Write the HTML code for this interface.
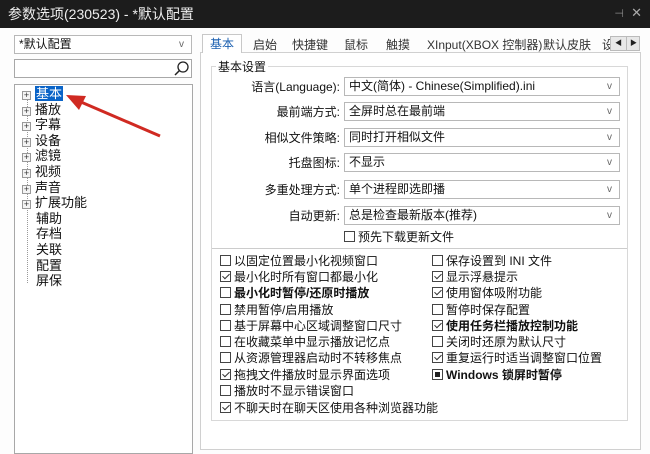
<!DOCTYPE html>
<html><head><meta charset="utf-8"><style>
*{margin:0;padding:0;box-sizing:border-box}
body{width:650px;height:450px;overflow:hidden;background:#fdfdfd;font-family:"Liberation Sans","Noto Sans CJK SC",sans-serif;font-size:12px;color:#111;position:relative}
.a{position:absolute;white-space:nowrap}
.title{left:0;top:0;width:650px;height:28px;background:#1c1c1c;color:#eee;font-size:14px;line-height:28px;padding-left:8px}
.box{position:absolute;border:1px solid #a8a8a8;background:#fff}
.combo{position:absolute;border:1px solid #b8b8b8;background:#fff;height:19px;line-height:17px;padding-left:4px;font-size:12px}
.combo i{position:absolute;right:7px;top:0;font-style:normal;color:#666;font-size:10px}
.cb{position:absolute;white-space:nowrap;line-height:16px;font-size:12px}
.cb b.k{display:inline-block;width:11px;height:11px;border:1px solid #444;vertical-align:-1px;margin-right:3px;position:relative;background:#fff}
.cb b.k.c::after{content:"";position:absolute;left:3px;top:0px;width:3px;height:6px;border:solid #333;border-width:0 1.5px 1.5px 0;transform:rotate(45deg)}
.cb b.k.f::after{content:"";position:absolute;left:2px;top:2px;width:5px;height:5px;background:#222}
.bold{font-weight:bold}
.tree{position:absolute;font-size:13px;line-height:15.6px}
.pm{display:inline-block;width:9px;height:9px;border:1px solid #999;font-size:9px;line-height:7px;text-align:center;color:#333;margin-right:4px;vertical-align:0px;background:#f4f4f4}
.lbl{position:absolute;right:310px;text-align:right;white-space:nowrap}
</style></head><body>
<div class="a title">参数选项(230523) - *默认配置</div>
<div class="a" style="right:26px;top:7px;color:#888;font-size:11px">⊣</div>
<div class="a" style="right:8px;top:5px;color:#aaa;font-size:13px">✕</div>

<div class="combo" style="left:14px;top:35px;width:178px;">*默认配置<i>v</i></div>
<div class="box" style="left:14px;top:59px;width:178px;height:19px"></div>
<svg class="a" style="left:172px;top:60px" width="18" height="18"><circle cx="11" cy="7" r="5" fill="none" stroke="#222" stroke-width="1.3"/><line x1="7.5" y1="10.5" x2="3" y2="15" stroke="#222" stroke-width="1.5"/></svg>
<div class="box" style="left:14px;top:84px;width:179px;height:370px"></div>
<div class="a" style="left:27px;top:95px;height:188px;border-left:1px dotted #999"></div>
<div class="tree" style="left:22px;top:86px">
<div><span class="pm">+</span><span style="background:#0a64c8;color:#fff;padding:0 1px">基本</span></div>
<div><span class="pm">+</span>播放</div>
<div><span class="pm">+</span>字幕</div>
<div><span class="pm">+</span>设备</div>
<div><span class="pm">+</span>滤镜</div>
<div><span class="pm">+</span>视频</div>
<div><span class="pm">+</span>声音</div>
<div><span class="pm">+</span>扩展功能</div>
<div style="padding-left:14px">辅助</div>
<div style="padding-left:14px">存档</div>
<div style="padding-left:14px">关联</div>
<div style="padding-left:14px">配置</div>
<div style="padding-left:14px">屏保</div>
</div>
<svg class="a" style="left:60px;top:85px" width="110" height="60"><line x1="100" y1="51" x2="14" y2="14" stroke="#d02a22" stroke-width="3"/><polygon points="6,10 26,11 19,25" fill="#d02a22"/></svg>

<div class="a" style="left:200px;top:52px;width:441px;height:398px;border:1px solid #d0d0d0;background:#fff"></div>
<div class="a" style="left:202px;top:34px;width:40px;height:19px;border:1px solid #c8c8c8;border-bottom:none;background:#fff;color:#1a5fb0;text-align:center;line-height:18px">基本</div>
<div class="a" style="left:253px;top:36px;color:#333">启始</div>
<div class="a" style="left:292px;top:36px;color:#333">快捷键</div>
<div class="a" style="left:344px;top:36px;color:#333">鼠标</div>
<div class="a" style="left:386px;top:36px;color:#333">触摸</div>
<div class="a" style="left:427px;top:36px;color:#333">XInput(XBOX 控制器)</div>
<div class="a" style="left:543px;top:36px;color:#333">默认皮肤</div>
<div class="a" style="left:602px;top:36px;color:#333;width:8px;overflow:hidden">设</div>
<div class="a" style="left:610px;top:36px;width:30px;height:15px;border:1px solid #bbb;background:#e8e8e8;font-size:7px;line-height:13px;color:#222"><span style="position:absolute;left:4px">◀</span><span style="position:absolute;left:15px;top:0;height:13px;border-left:1px solid #bbb"></span><span style="position:absolute;left:19px">▶</span></div>

<div class="a" style="left:211px;top:66px;width:417px;height:355px;border:1px solid #d8d8d8"></div>
<div class="a" style="left:216px;top:58px;background:#fff;padding:0 2px">基本设置</div>

<div class="lbl" style="top:78px">语言(Language):</div>
<div class="lbl" style="top:103px">最前端方式:</div>
<div class="lbl" style="top:129px">相似文件策略:</div>
<div class="lbl" style="top:154px">托盘图标:</div>
<div class="lbl" style="top:181px">多重处理方式:</div>
<div class="lbl" style="top:207px">自动更新:</div>
<div class="combo" style="left:344px;top:77px;width:276px">中文(简体) - Chinese(Simplified).ini<i>v</i></div>
<div class="combo" style="left:344px;top:102px;width:276px">全屏时总在最前端<i>v</i></div>
<div class="combo" style="left:344px;top:128px;width:276px">同时打开相似文件<i>v</i></div>
<div class="combo" style="left:344px;top:153px;width:276px">不显示<i>v</i></div>
<div class="combo" style="left:344px;top:180px;width:276px">单个进程即选即播<i>v</i></div>
<div class="combo" style="left:344px;top:206px;width:276px">总是检查最新版本(推荐)<i>v</i></div>
<div class="cb" style="left:344px;top:229px"><b class="k"></b>预先下载更新文件</div>
<div class="a" style="left:212px;top:248px;width:415px;border-top:1px solid #ccc"></div>

<div class="cb" style="left:220px;top:253px"><b class="k"></b>以固定位置最小化视频窗口</div>
<div class="cb" style="left:220px;top:269px"><b class="k c"></b>最小化时所有窗口都最小化</div>
<div class="cb bold" style="left:220px;top:285px"><b class="k"></b>最小化时暂停/还原时播放</div>
<div class="cb" style="left:220px;top:302px"><b class="k"></b>禁用暂停/启用播放</div>
<div class="cb" style="left:220px;top:318px"><b class="k"></b>基于屏幕中心区域调整窗口尺寸</div>
<div class="cb" style="left:220px;top:334px"><b class="k"></b>在收藏菜单中显示播放记忆点</div>
<div class="cb" style="left:220px;top:350px"><b class="k"></b>从资源管理器启动时不转移焦点</div>
<div class="cb" style="left:220px;top:367px"><b class="k c"></b>拖拽文件播放时显示界面选项</div>
<div class="cb" style="left:220px;top:383px"><b class="k"></b>播放时不显示错误窗口</div>
<div class="cb" style="left:220px;top:400px"><b class="k c"></b>不聊天时在聊天区使用各种浏览器功能</div>

<div class="cb" style="left:432px;top:253px"><b class="k"></b>保存设置到 INI 文件</div>
<div class="cb" style="left:432px;top:269px"><b class="k c"></b>显示浮悬提示</div>
<div class="cb" style="left:432px;top:285px"><b class="k c"></b>使用窗体吸附功能</div>
<div class="cb" style="left:432px;top:302px"><b class="k"></b>暂停时保存配置</div>
<div class="cb bold" style="left:432px;top:318px"><b class="k c"></b>使用任务栏播放控制功能</div>
<div class="cb" style="left:432px;top:334px"><b class="k"></b>关闭时还原为默认尺寸</div>
<div class="cb" style="left:432px;top:350px"><b class="k c"></b>重复运行时适当调整窗口位置</div>
<div class="cb bold" style="left:432px;top:367px"><b class="k f"></b>Windows 锁屏时暂停</div>
</body></html>
